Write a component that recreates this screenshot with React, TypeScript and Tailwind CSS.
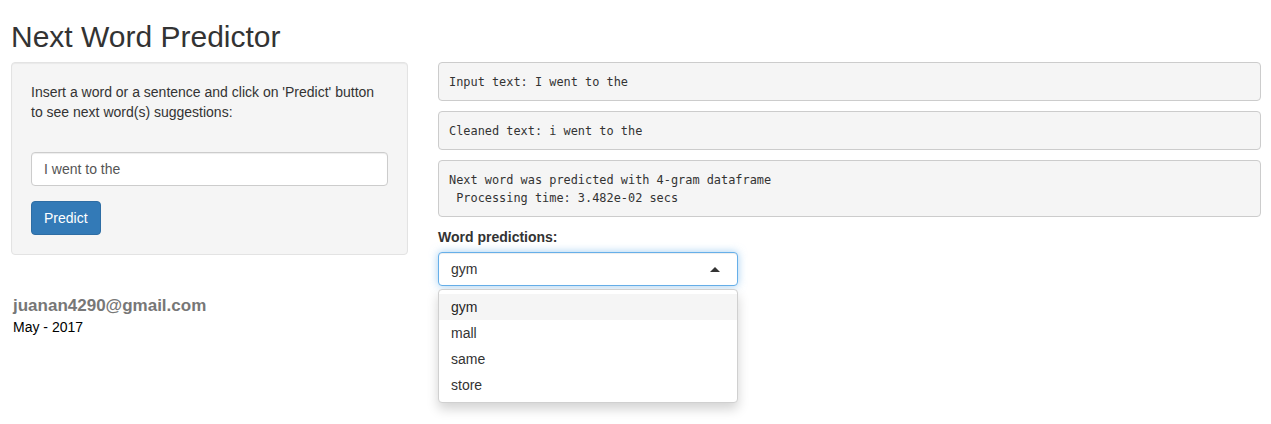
import React from 'react';

const sans = { fontFamily: '"Liberation Sans", Arial, sans-serif' };
const mono = { fontFamily: '"DejaVu Sans Mono", "Liberation Mono", monospace' };

const predictions = ['gym', 'mall', 'same', 'store'];

const OutputBox: React.FC<{ lines: string[] }> = ({ lines }) => (
  <pre
    style={mono}
    className="mb-[10px] rounded-[4px] border border-[#cccccc] bg-[#f5f5f5] px-[10px] py-[9.5px] text-[11.9px] leading-[18px] whitespace-pre text-[#333333]"
  >
    {lines.join('\n')}
  </pre>
);

export default function App() {
  return (
    <div style={sans} className="min-h-screen bg-white px-[11px] text-[14px] leading-[20px] text-[#333333]">
      <h2 className="mt-[20px] mb-[9px] text-[30px] leading-[33px] font-normal">Next Word Predictor</h2>

      <div className="grid grid-cols-[397px_823px] gap-x-[30px]">
        {/* sidebar */}
        <div>
          <div className="rounded-[4px] border border-[#e3e3e3] bg-[#f5f5f5] p-[19px] shadow-[inset_0_1px_1px_rgba(0,0,0,0.05)]">
            <p className="mb-[30px]">
              Insert a word or a sentence and click on 'Predict' button to see next word(s) suggestions:
            </p>
            <div className="mb-[15px] flex h-[34px] items-center rounded-[4px] border border-[#cccccc] bg-white px-[12px] text-[#555555] shadow-[inset_0_1px_1px_rgba(0,0,0,0.075)]">
              I went to the
            </div>
            <button
              type="button"
              className="h-[34px] rounded-[4px] border border-[#2e6da4] bg-[#337ab7] px-[12px] text-white"
            >
              Predict
            </button>
          </div>

          <div className="mt-[41px] ml-[2px]">
            <div className="text-[17px] leading-[20px] font-bold text-[#777777]">juanan4290@gmail.com</div>
            <div className="mt-[1px] text-[14px] leading-[20px] text-black">May - 2017</div>
          </div>
        </div>

        {/* main panel */}
        <div>
          <OutputBox lines={['Input text: I went to the']} />
          <OutputBox lines={['Cleaned text: i went to the']} />
          <OutputBox lines={['Next word was predicted with 4-gram dataframe', ' Processing time: 3.482e-02 secs']} />

          <div className="mb-[5px] font-bold">Word predictions:</div>
          <div className="w-[300px]">
            <div className="flex h-[34px] items-center justify-between rounded-[4px] border border-[#66afe9] bg-white pr-[17px] pl-[12px] text-[#333333] shadow-[inset_0_1px_1px_rgba(0,0,0,0.075),0_0_8px_rgba(102,175,233,0.6)]">
              <span>gym</span>
              <span className="h-0 w-0 border-x-[5px] border-b-[5px] border-x-transparent border-b-[#333333]" />
            </div>
            <div className="mt-[3px] rounded-[4px] border border-[#d0d0d0] bg-white py-[4px] shadow-[0_6px_12px_rgba(0,0,0,0.175)]">
              {predictions.map((p, i) => (
                <div
                  key={p}
                  className={`px-[12px] py-[3px] leading-[20px] ${i === 0 ? 'bg-[#f5f5f5] text-[#262626]' : 'text-[#333333]'}`}
                >
                  {p}
                </div>
              ))}
            </div>
          </div>
        </div>
      </div>
    </div>
  );
}
